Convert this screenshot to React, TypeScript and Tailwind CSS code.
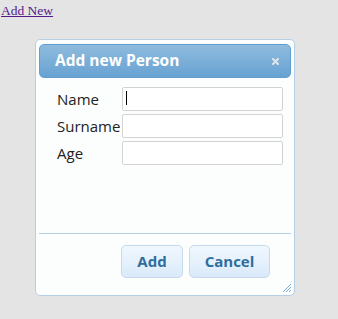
import { useState } from 'react'

const font = { fontFamily: '"Open Sans", "Noto Sans", sans-serif' }

function Field({ label, caret }: { label: string; caret?: boolean }) {
  const [value, setValue] = useState('')
  return (
    <div className="flex items-center h-[24px]">
      <label className="w-[65px] text-[15px] text-[#222] leading-none">{label}</label>
      <div className="relative">
        <input
          value={value}
          onChange={(e) => setValue(e.target.value)}
          className="w-[161px] h-[24px] bg-white border border-[#d3d3d3] rounded-[2px] outline-none px-[3px] text-[14px]"
        />
        {caret && value === '' && (
          <span className="pointer-events-none absolute left-[4px] top-[4px] w-px h-[14px] bg-black" />
        )}
      </div>
    </div>
  )
}

function DialogButton({ children, width }: { children: string; width: string }) {
  return (
    <button
      className={`${width} h-[33px] rounded-[5px] border border-[#c5dbec] bg-gradient-to-b from-[#eff7fe] via-[#e6f1fc] to-[#d9e9f9] text-[15px] font-bold text-[#2e6e9e]`}
    >
      {children}
    </button>
  )
}

export default function App() {
  return (
    <div className="h-screen bg-[#e4e4e4]" style={font}>
      <div
        className="h-[39px] pt-[4px] pl-[1px] text-[13.5px] leading-none"
        style={{ fontFamily: '"Liberation Serif", serif' }}
      >
        <a href="#" className="text-[#551a8b] underline">
          Add New
        </a>
      </div>

      <div className="relative ml-[35px] w-[260px] h-[257px] flex flex-col border border-[#b5d0e6] rounded-[5px] bg-[#fcfdfd] px-[3px] pt-[4px]">
        <div className="h-[34px] flex items-center justify-between pl-[15px] pr-[11px] rounded-[5px] border border-[#5f9fd1] bg-gradient-to-b from-[#8fbbdd] to-[#67a2d2]">
          <span className="text-[15.5px] font-bold text-white">Add new Person</span>
          <svg width="7" height="7" viewBox="0 0 7 7" className="text-[#dfe7ee]">
            <path d="M1 1L6 6M6 1L1 6" stroke="currentColor" strokeWidth="2" strokeLinecap="round" />
          </svg>
        </div>

        <div className="flex-1 flex flex-col gap-[3px] pt-[9px] pl-[18px]">
          <Field label="Name" caret />
          <Field label="Surname" />
          <Field label="Age" />
        </div>

        <div className="h-px bg-[#b5d0e6]" />

        <div className="h-[61px] flex justify-end gap-[6px] pt-[11px] pr-[21px]">
          <DialogButton width="w-[62px]">Add</DialogButton>
          <DialogButton width="w-[81px]">Cancel</DialogButton>
        </div>

        <svg
          width="10"
          height="10"
          viewBox="0 0 10 10"
          className="absolute right-[2px] bottom-[2px] text-[#7fb0db]"
        >
          <path d="M9 1L1 9M9 4L4 9M9 7L7 9" stroke="currentColor" strokeWidth="1" />
        </svg>
      </div>
    </div>
  )
}
